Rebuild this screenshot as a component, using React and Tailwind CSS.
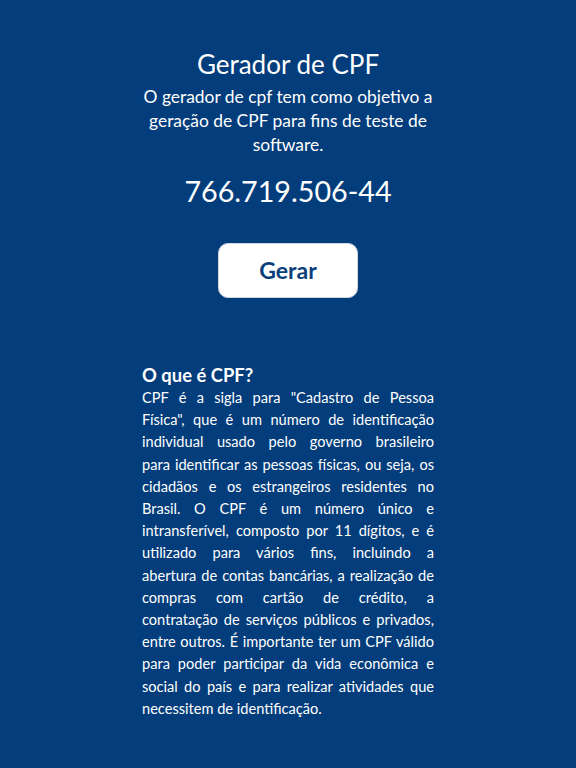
const linhas = [
  'CPF é a sigla para "Cadastro de Pessoa',
  'Física", que é um número de identificação',
  "individual usado pelo governo brasileiro",
  "para identificar as pessoas físicas, ou seja, os",
  "cidadãos e os estrangeiros residentes no",
  "Brasil. O CPF é um número único e",
  "intransferível, composto por 11 dígitos, e é",
  "utilizado para vários fins, incluindo a",
  "abertura de contas bancárias, a realização de",
  "compras com cartão de crédito, a",
  "contratação de serviços públicos e privados,",
  "entre outros. É importante ter um CPF válido",
  "para poder participar da vida econômica e",
  "social do país e para realizar atividades que",
  "necessitem de identificação.",
];

export default function App() {
  return (
    <div className="min-h-[768px] bg-[#033d7b] text-white font-['Lato','Noto_Sans',sans-serif]">
      <div className="mx-auto w-[292px] pt-12 pb-10">
        <div className="text-center">
          <h1 className="text-[26px] leading-[32px]">Gerador de CPF</h1>
          <p className="-mx-2 mt-[5px] text-[17.4px] leading-6">
            O gerador de cpf tem como objetivo a<br />
            geração de CPF para fins de teste de<br />
            software.
          </p>
          <div className="mt-[14px] text-[28.7px] leading-[40px]">
            766.719.506-44
          </div>
          <button
            type="button"
            className="mt-8 h-[55px] w-[140px] rounded-[10px] border border-gray-300 bg-white text-[23px] font-bold text-[#0b3f7c]"
          >
            Gerar
          </button>
        </div>

        <h2 className="mt-[65px] text-[18.4px] font-bold leading-6">
          O que é CPF?
        </h2>
        <div className="text-[14.6px] leading-[22.2px]">
          {linhas.map((linha, i) => (
            <div
              key={linha}
              className={
                i < linhas.length - 1
                  ? "text-justify [text-align-last:justify]"
                  : "text-left"
              }
            >
              {linha}
            </div>
          ))}
        </div>
      </div>
    </div>
  );
}
